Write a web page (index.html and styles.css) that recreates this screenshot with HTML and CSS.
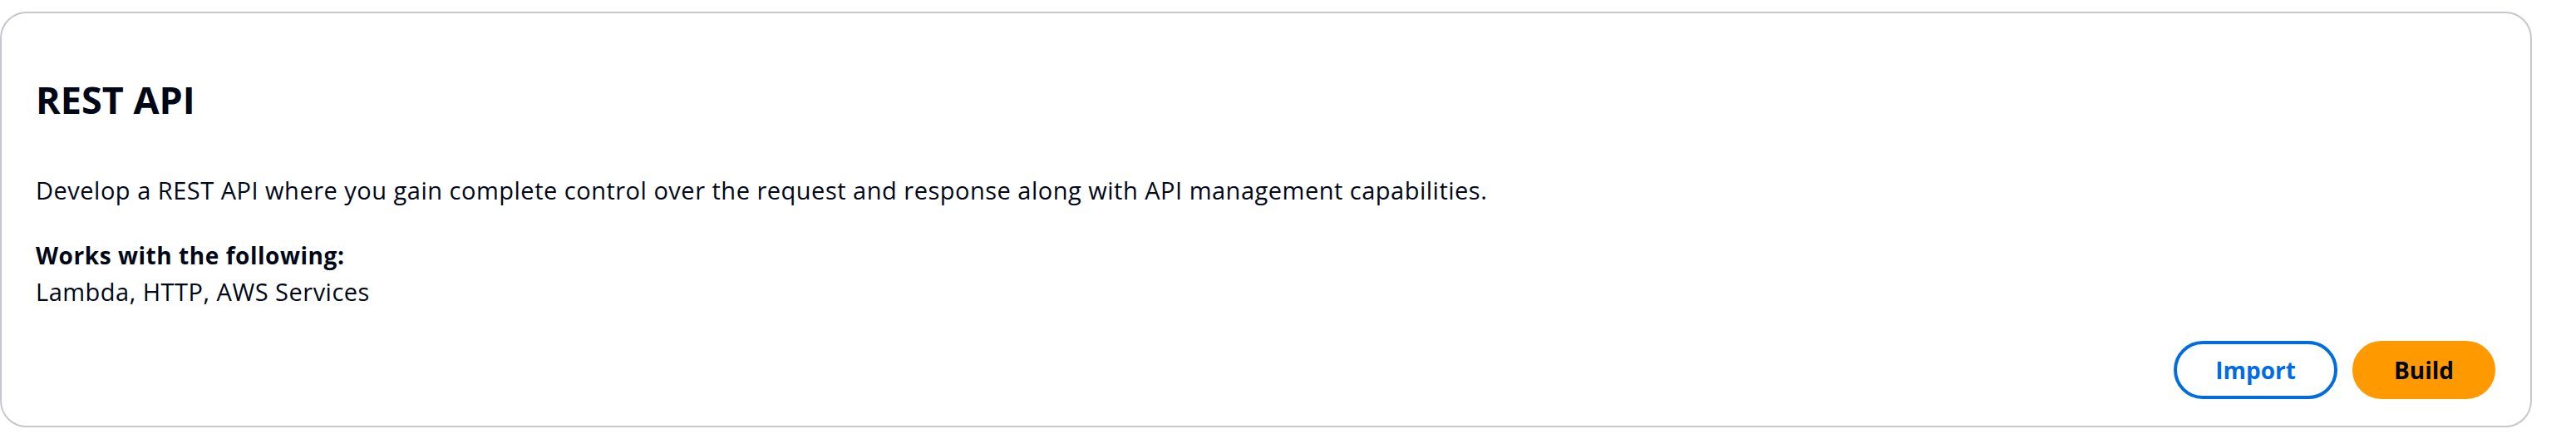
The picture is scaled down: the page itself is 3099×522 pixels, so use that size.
FILE: index.html
```html
<!DOCTYPE html>
<html lang="en">
<head>
<meta charset="utf-8">
<title>REST API</title>
<link rel="stylesheet" href="styles.css">
</head>
<body>
<div class="card">
  <h2 class="title">REST API</h2>
  <p class="desc">Develop a REST API where you gain complete control over the request and response along with API management capabilities.</p>
  <div class="works">
    <div class="works-label">Works with the following:</div>
    <div class="works-list">Lambda, HTTP, AWS Services</div>
  </div>
  <div class="actions">
    <button class="btn btn-normal">Import</button>
    <button class="btn btn-primary">Build</button>
  </div>
</div>
</body>
</html>
```
FILE: styles.css
```css
html, body {
  margin: 0;
  padding: 0;
  background: #ffffff;
}
body {
  font-family: "Open Sans", "Noto Sans", Arial, sans-serif;
  color: #000716;
}
.card {
  box-sizing: border-box;
  margin-top: 14px;
  width: 3046px;
  height: 500px;
  border: 2px solid #c6c6cd;
  border-radius: 32px;
  padding: 76px 42px 32px 41px;
  display: flex;
  flex-direction: column;
}
.title {
  margin: 0;
  font-size: 45px;
  line-height: 56px;
  font-weight: 700;
}
.desc {
  margin: 59px 0 0 0;
  font-size: 29px;
  line-height: 44px;
  letter-spacing: 0.5px;
}
.works {
  margin-top: 34px;
  font-size: 29px;
  line-height: 44px;
}
.works-label {
  font-size: 28px;
  font-weight: 700;
  letter-spacing: 0.55px;
}
.works-list {
  letter-spacing: 0.5px;
}
.actions {
  margin-top: auto;
  display: flex;
  justify-content: flex-end;
  gap: 18px;
}
.btn {
  box-sizing: border-box;
  height: 70px;
  padding: 0 46px;
  border-radius: 35px;
  border: 4px solid;
  font-family: inherit;
  font-size: 28px;
  font-weight: 700;
  line-height: 1;
  cursor: pointer;
}
.btn-normal {
  background: #ffffff;
  border-color: #006ce0;
  color: #006ce0;
}
.btn-primary {
  background: #ff9900;
  border-color: #ff9900;
  color: #000716;
}
```
